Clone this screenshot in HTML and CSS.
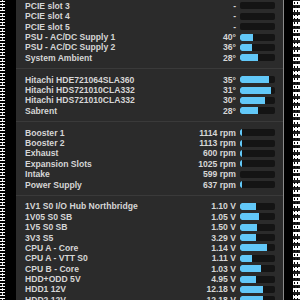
FILE: index.html
```html
<!DOCTYPE html>
<html lang="en">
  <head>
    <meta charset="UTF-8" />
    <meta name="viewport" content="width=device-width, initial-scale=1.0" />
    <title>Sensors</title>
    <link rel="stylesheet" href="styles.css">
  </head>
  <body>
    <div class="screen">
      <div class="noise noise-left"></div>
      <div class="panel">
        <div class="group">
          <div class="row"><span class="label">PCIE slot 3</span><span class="value">-</span><span class="bar"></span></div>
          <div class="row"><span class="label">PCIE slot 4</span><span class="value">-</span><span class="bar"></span></div>
          <div class="row"><span class="label">PCIE slot 5</span><span class="value">-</span><span class="bar"></span></div>
          <div class="row"><span class="label">PSU - AC/DC Supply 1</span><span class="value">40°</span><span class="bar"><i style="width: 13px"></i></span></div>
          <div class="row"><span class="label">PSU - AC/DC Supply 2</span><span class="value">36°</span><span class="bar"><i style="width: 12px"></i></span></div>
          <div class="row"><span class="label">System Ambient</span><span class="value">28°</span><span class="bar"><i style="width: 18px"></i></span></div>
        </div>
        <div class="sep"></div>
        <div class="group">
          <div class="row"><span class="label">Hitachi HDE721064SLA360</span><span class="value">35°</span><span class="bar"><i style="width: 29px"></i></span></div>
          <div class="row"><span class="label">Hitachi HDS721010CLA332</span><span class="value">31°</span><span class="bar"><i style="width: 31px"></i></span></div>
          <div class="row"><span class="label">Hitachi HDS721010CLA332</span><span class="value">30°</span><span class="bar"><i style="width: 25px"></i></span></div>
          <div class="row"><span class="label">Sabrent</span><span class="value">28°</span><span class="bar"><i style="width: 18px"></i></span></div>
        </div>
        <div class="sep"></div>
        <div class="group">
          <div class="row"><span class="label">Booster 1</span><span class="value">1114 rpm</span><span class="bar"><i style="width: 2px"></i></span></div>
          <div class="row"><span class="label">Booster 2</span><span class="value">1113 rpm</span><span class="bar"><i style="width: 2px"></i></span></div>
          <div class="row"><span class="label">Exhaust</span><span class="value">600 rpm</span><span class="bar"><i style="width: 2px"></i></span></div>
          <div class="row"><span class="label">Expansion Slots</span><span class="value">1025 rpm</span><span class="bar"><i style="width: 2px"></i></span></div>
          <div class="row"><span class="label">Intake</span><span class="value">599 rpm</span><span class="bar"></span></div>
          <div class="row"><span class="label">Power Supply</span><span class="value">637 rpm</span><span class="bar"><i style="width: 2px"></i></span></div>
        </div>
        <div class="sep"></div>
        <div class="group">
          <div class="row"><span class="label">1V1 S0 I/O Hub Northbridge</span><span class="value">1.10 V</span><span class="bar"><i style="width: 16px"></i></span></div>
          <div class="row"><span class="label">1V05 S0 SB</span><span class="value">1.05 V</span><span class="bar"><i style="width: 19px"></i></span></div>
          <div class="row"><span class="label">1V5 S0 SB</span><span class="value">1.50 V</span><span class="bar"><i style="width: 17px"></i></span></div>
          <div class="row"><span class="label">3V3 S5</span><span class="value">3.29 V</span><span class="bar"><i style="width: 16px"></i></span></div>
          <div class="row"><span class="label">CPU A - Core</span><span class="value">1.14 V</span><span class="bar"><i style="width: 27px"></i></span></div>
          <div class="row"><span class="label">CPU A - VTT S0</span><span class="value">1.11 V</span><span class="bar"><i style="width: 12px"></i></span></div>
          <div class="row"><span class="label">CPU B - Core</span><span class="value">1.03 V</span><span class="bar"><i style="width: 21px"></i></span></div>
          <div class="row"><span class="label">HDD+ODD 5V</span><span class="value">4.95 V</span><span class="bar"><i style="width: 16px"></i></span></div>
          <div class="row"><span class="label">HDD1 12V</span><span class="value">12.18 V</span><span class="bar"><i style="width: 23px"></i></span></div>
          <div class="row"><span class="label">HDD2 12V</span><span class="value">12.18 V</span><span class="bar"><i style="width: 23px"></i></span></div>
        </div>
      </div>
      <div class="noise noise-right"></div>
    </div>
  </body>
</html>
```

FILE: styles.css
```css
body {
  margin: 0;
  background: #000;
  font-family: "Liberation Sans", Arial, sans-serif;
}

.screen {
  display: flex;
  height: 300px;
  overflow: hidden;
}

.noise {
  flex: none;
  height: 100%;
}

.noise-left {
  width: 5px;
  margin-right: 11px;
  background-color: #000;
  background-image: radial-gradient(#fff 0.7px, transparent 0.8px),
    radial-gradient(#ddd 0.6px, transparent 0.7px);
  background-size: 2px 3px, 3px 5px;
  background-position: 0 0, 1px 2px;
}

.noise-right {
  width: 7px;
  margin-left: 9px;
  background-color: #fff;
  background-image: radial-gradient(#000 0.7px, transparent 0.8px),
    radial-gradient(#222 0.6px, transparent 0.7px);
  background-size: 3px 4px, 2px 7px;
  background-position: 0 1px, 1px 3px;
}

.panel {
  flex: none;
  width: 267px;
  background: #2b2b2b;
  border-right: 1px solid #8a8a8a;
  padding-top: 0.8px;
}

.row {
  display: grid;
  grid-template-columns: 1fr auto 35px;
  column-gap: 4px;
  align-items: center;
  height: 10.375px;
  padding: 0 8px 0 9px;
  font-size: 8.6px;
  font-weight: bold;
  color: #d6d6d6;
  white-space: nowrap;
}

.value {
  text-align: right;
}

.bar {
  display: flex;
  height: 7px;
  border-radius: 2px;
  background: #141414;
  overflow: hidden;
}

.bar i {
  display: block;
  height: 100%;
  background: #62c8f8;
  border-radius: 2px 0 0 2px;
}

.sep {
  height: 11.5px;
  display: flex;
  align-items: center;
}

.sep::before {
  content: "";
  flex: 1;
  height: 1px;
  background: #3a3a3a;
}
```
